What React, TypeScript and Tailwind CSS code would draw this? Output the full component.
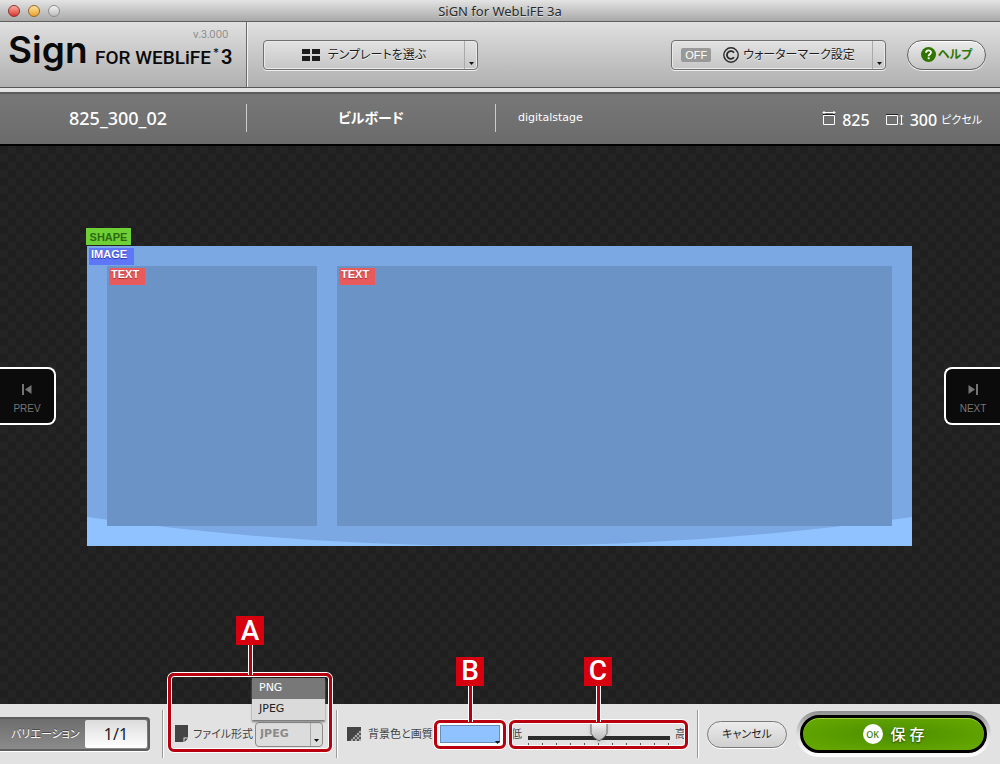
import { useState } from 'react'
import type { ReactNode } from 'react'
import clsx from 'clsx'

const jp = "font-['Noto_Sans','Noto_Sans_CJK_JP',sans-serif] [font-feature-settings:'palt']"
const verdana = "font-['DejaVu_Sans',sans-serif]"
const arial = "font-['Liberation_Sans',sans-serif]"

const formats = ['PNG', 'JPEG']
const ticks = [0, 1, 2, 3, 4, 5, 6, 7, 8, 9, 10]

function Caret({ className }: { className?: string }) {
  return (
    <svg className={clsx('pointer-events-none', className)} width="5" height="3" viewBox="0 0 5 3" aria-hidden="true">
      <path d="M0 0h5L2.5 3z" fill="#111" />
    </svg>
  )
}

function Divider() {
  return <span className="h-12 w-0.5 flex-shrink-0 border-l border-[#999] bg-white" />
}

function Callout({ label, box, badge, stem }: { label: string; box: string; badge: string; stem: string }) {
  return (
    <span className="pointer-events-none absolute inset-0">
      <span
        className={clsx(
          'absolute inset-x-0 rounded-md border-[3px] border-[#b8000f] shadow-[0_0_0_1px_#fff,inset_0_0_0_1px_#fff]',
          box
        )}
      />
      <span className={clsx('absolute w-[5px] border-x border-white bg-[#b8000f]', stem)} />
      <span
        className={clsx(
          "absolute flex h-[29px] w-7 items-center justify-center bg-[#d7000f] font-['Roboto',sans-serif] text-[28px] leading-none font-medium text-white",
          badge
        )}
      >
        {label}
      </span>
    </span>
  )
}

function TitleBar() {
  const lights = ['from-[#f9a9a0] to-[#d8302c] border-[#8a3330]', 'from-[#fde39a] to-[#eaa125] border-[#93682a]', 'from-[#f4f4f4] to-[#bcbcbc] border-[#8c8c8c]']
  return (
    <div className="relative flex h-[22px] items-center border-b border-[#606060] bg-linear-to-b from-[#e4e4e4] to-[#a9a9a9] pl-2">
      <div className="flex gap-2">
        {lights.map((light) => (
          <span key={light} className={clsx('h-3 w-3 rounded-full border bg-linear-to-b', light)} />
        ))}
      </div>
      <h1 className="absolute inset-x-0 text-center font-['Noto_Sans',sans-serif] text-[13px] leading-5 text-[#2b2b2b] [text-shadow:0_1px_0_#ddd]">
        SiGN for WebLiFE 3a
      </h1>
    </div>
  )
}

function Logo() {
  return (
    <div className="relative h-full w-[247px] flex-shrink-0 border-r border-[#6a6a6a] shadow-[1px_0_0_#f2f2f2]">
      <svg width="240" height="64" viewBox="0 0 240 64" role="img" aria-label="Sign for WebLiFE 3">
        <g fontFamily="Inter, sans-serif" fill="#0a0a0a">
          <text x="8" y="41" fontSize="37" fontWeight="600">Sign</text>
          <text x="95" y="42" fontSize="19" fontFamily="Roboto, sans-serif" fontWeight="500">FOR WEBLiFE</text>
          <text x="213" y="35" fontSize="12">*</text>
          <text x="221" y="42" fontSize="20" fontFamily="Roboto, sans-serif" fontWeight="600">3</text>
        </g>
        <text x="193" y="16" fontSize="10" fontFamily="Inter, sans-serif" fill="#8a8a8a">v.3.000</text>
      </svg>
    </div>
  )
}

function ToolButton({ children }: { children: ReactNode }) {
  return (
    <button
      type="button"
      className={clsx(
        'flex h-[30px] w-[215px] rounded-sm border border-[#707070] bg-linear-to-b from-[#e2e2e2] to-[#c6c6c6] text-xs text-[#1c1c1c] shadow-[0_1px_0_#eee,inset_0_0_0_1px_#eaeaea] [text-shadow:0_1px_0_#eee]',
        jp
      )}
    >
      <span className="flex h-full flex-1 items-center justify-center">{children}</span>
      <span className="flex h-full w-[13px] items-end justify-center border-l border-[#aaa] pb-1">
        <Caret />
      </span>
    </button>
  )
}

function Header() {
  return (
    <header className="flex h-[66px] items-center border-b border-[#555] bg-linear-to-b from-[#e0e0e0] to-[#b0b0b0]">
      <Logo />
      <div className="flex flex-1 items-center pr-[14px] pl-4">
        <ToolButton>
          <svg className="mr-2" width="18" height="12" viewBox="0 0 18 12" aria-hidden="true">
            <path d="M0 0h8v5H0zM10 0h8v5h-8zM0 7h8v5H0zM10 7h8v5h-8z" fill="#1c1c1c" />
          </svg>
          テンプレートを選ぶ
        </ToolButton>
        <div className="ml-auto flex items-center gap-[21px]">
          <ToolButton>
            <span className={clsx('mr-3 rounded-xs bg-[#999] px-1 text-[11px] leading-[14px] text-white [text-shadow:none]', arial)}>OFF</span>
            <svg className="mr-1" width="16" height="16" viewBox="0 0 16 16" fill="none" stroke="#2a2a2a" aria-hidden="true">
              <circle cx="8" cy="8" r="7.2" strokeWidth="1.4" />
              <path d="M11 5.700a3.900 3.900 0 1 0 0 4.600" strokeWidth="1.8" />
            </svg>
            <span className="pr-2">ウォーターマーク設定</span>
          </ToolButton>
          <button
            type="button"
            className={clsx(
              'flex h-[30px] w-[79px] items-center justify-center rounded-full border border-[#606060] bg-linear-to-b from-[#ececec] to-[#c4c4c4] text-xs font-bold text-[#2f7500] shadow-[0_1px_0_#f4f4f4,inset_0_1px_0_#fff]',
              jp
            )}
          >
            <svg className="mr-0.5" width="15" height="15" viewBox="0 0 15 15" aria-hidden="true">
              <circle cx="7.5" cy="7.5" r="7.5" fill="#2f7500" />
              <path d="M5 5.800c0-3.200 5-3.200 5-.3 0 1.800-2.400 1.700-2.400 3.700" fill="none" stroke="#fff" strokeWidth="1.8" />
              <path d="M6.700 10.300h1.900v1.900H6.700z" fill="#fff" />
            </svg>
            ヘルプ
          </button>
        </div>
      </div>
    </header>
  )
}

function InfoBar() {
  return (
    <div
      className={clsx(
        'flex h-[58px] items-center border-t-4 border-b-2 border-t-[#e3e3e3] border-b-black bg-linear-to-b from-[#787878] to-[#6b6b6b] text-white shadow-[inset_0_3px_1px_-1px_#5a5a5a]',
        jp
      )}
    >
      <p className="w-[246px] pr-2.5 text-center text-lg font-medium">825_300_02</p>
      <span className="h-7 w-px bg-[#ccc]" />
      <p className="w-[248px] text-center text-sm font-bold">ビルボード</p>
      <span className="h-7 w-px bg-[#ccc]" />
      <p className={clsx('pl-[22px] text-[11px]', verdana)}>digitalstage</p>
      <div className="ml-auto flex items-center pt-1 pr-[18px] text-base font-medium">
        <svg className="mr-1.5 mb-1" width="14" height="16" viewBox="0 0 14 16" fill="none" stroke="#fff" aria-hidden="true">
          <path d="M1 2.500h12M2.500 1L1 2.500 2.500 4M11.500 1L13 2.500 11.500 4M1.500 5.500h11v9h-11z" />
          <path d="M1 4.500h12" stroke="#222" />
        </svg>
        825
        <svg className="mr-1.5 ml-4" width="18" height="12" viewBox="0 0 18 12" fill="none" stroke="#fff" aria-hidden="true">
          <path d="M.5 1.500h11v9H.5zM15.500 1v10M14 2.500L15.500 1 17 2.500M14 9.500L15.500 11 17 9.500" />
          <path d="M0 .5h12" stroke="#222" />
        </svg>
        300
        <span className="ml-1 text-[11px] font-normal">ピクセル</span>
      </div>
    </div>
  )
}

function TextCell({ className }: { className: string }) {
  return (
    <div className={clsx('relative h-[260px] bg-[#6b93c5] pt-0.5 pl-0.5', className)}>
      <span className={clsx('block h-[17px] w-9 bg-[#e95a5d] pl-0.5 text-[11px] leading-[13px] font-bold text-white [text-shadow:0_1px_1px_#933]', arial)}>
        TEXT
      </span>
    </div>
  )
}

function NavButton({ label, className, children }: { label: string; className: string; children: ReactNode }) {
  return (
    <button
      type="button"
      className={clsx(
        'flex h-[58px] w-14 flex-shrink-0 flex-col items-center justify-center gap-2 border-y-2 border-white bg-[#0b0b0b] pt-1.5 text-[10px] leading-3 text-[#757575]',
        arial,
        className
      )}
    >
      <svg width="10" height="11" viewBox="0 0 10 11" fill="#757575" aria-hidden="true">
        {children}
      </svg>
      {label}
    </button>
  )
}

function Stage() {
  return (
    <main className="flex flex-1 items-center bg-[#1f1f1f] bg-[conic-gradient(#242424_25%,#1f1f1f_0_50%,#242424_0_75%,#1f1f1f_0)] bg-size-[16px_16px] pb-[58px]">
      <NavButton label="PREV" className="rounded-r-lg border-r-2">
        <path d="M0 0h2v11H0zM9.500 1v9L3 5.500z" />
      </NavButton>
      <div className="relative mr-8 ml-[31px] flex h-[300px] flex-1 gap-5 bg-[#7ba7e2] p-5">
        <svg className="absolute inset-0 h-full w-full" viewBox="0 0 825 300" preserveAspectRatio="none" aria-hidden="true">
          <path d="M0 271Q412.500 329 825 271V300H0z" fill="#8fc2ff" />
        </svg>
        <span className={clsx('absolute -top-[18px] -left-px h-[17px] w-[45px] bg-[#6fd035] text-center text-[11px] leading-[19px] font-bold text-[#2c6a12]', arial)}>
          SHAPE
        </span>
        <span className={clsx('absolute top-0.5 left-0.5 h-[17px] w-[45px] bg-[#5e77f8] pl-0.5 text-[11px] leading-[13px] font-bold text-white [text-shadow:0_1px_1px_#339]', arial)}>
          IMAGE
        </span>
        <TextCell className="w-[210px]" />
        <TextCell className="flex-1" />
      </div>
      <NavButton label="NEXT" className="rounded-l-lg border-l-2">
        <path d="M.5 1v9L7 5.500zM8 0h2v11H8z" />
      </NavButton>
    </main>
  )
}

function FormatField() {
  const [format, setFormat] = useState('JPEG')
  return (
    <div className="relative ml-1 flex h-9 w-[164px] items-center pl-[7px]">
      <svg className="mr-1" width="14" height="18" viewBox="0 0 14 18" aria-hidden="true">
        <path d="M0 0h13v12.500H8.500V17H0z" fill="#444" />
        <path d="M9.500 13.500H13L9.500 17z" fill="#444" />
      </svg>
      <label htmlFor="format" className="w-[62px] text-[11px] whitespace-nowrap text-[#444]">
        ファイル形式
      </label>
      <span className="relative">
        <select
          id="format"
          value={format}
          onChange={(e) => setFormat(e.target.value)}
          className={clsx('block h-[25px] w-[68px] appearance-none rounded-sm border border-[#8a8a8a] bg-[#dcdcdc] pl-1 text-[11px] font-bold text-[#8a8a8a]', verdana)}
        >
          {formats.map((f) => (
            <option key={f}>{f}</option>
          ))}
        </select>
        <span className="pointer-events-none absolute inset-y-px right-px flex w-3 items-end justify-center border-l border-[#aaa] pb-1">
          <Caret />
        </span>
      </span>
      <div className={clsx('absolute right-[7px] bottom-8 w-[73px] text-[11px] shadow-[0_2px_2px_#777]', verdana)}>
        {formats.map((f) => (
          <button
            key={f}
            type="button"
            onClick={() => setFormat(f)}
            className={clsx('block h-[21px] w-full pl-[7px] text-left', f === 'PNG' ? 'bg-[#787878] text-white' : 'bg-[#dadada] text-[#222]')}
          >
            {f}
          </button>
        ))}
      </div>
      <Callout label="A" box="bottom-0 h-[79px]" stem="bottom-[77px] left-[80px] h-[30px]" badge="bottom-[107px] left-[68px]" />
    </div>
  )
}

function ColorField() {
  const [color, setColor] = useState('#8fc2ff')
  return (
    <>
      <svg className="mr-[7px] ml-[9px]" width="14" height="14" viewBox="0 0 14 14" aria-hidden="true">
        <path d="M0 0h14v14H0z" fill="#a8a8a8" />
        <path d="M12 2h2v2h-2zM10 4h2v2h-2zM8 6h2v2H8zM12 6h2v2h-2zM6 8h2v2H6zM10 8h2v2h-2zM4 10h2v2H4zM8 10h2v2H8zM12 10h2v2h-2zM2 12h2v2H2zM6 12h2v2H6zM10 12h2v2h-2z" fill="#555" />
        <path d="M0 0h14v2L2 14H0z" fill="#444" />
      </svg>
      <label htmlFor="bgcolor" className="w-[66px] text-[11px] whitespace-nowrap text-[#444]">
        背景色と画質
      </label>
      <div className="relative flex h-[29px] w-[72px] items-center justify-center">
        <input
          id="bgcolor"
          type="color"
          value={color}
          onChange={(e) => setColor(e.target.value)}
          className="block h-[22px] w-16 appearance-none border border-white bg-white p-px [&::-webkit-color-swatch]:rounded-none [&::-webkit-color-swatch]:border [&::-webkit-color-swatch]:border-[#6a8db8] [&::-webkit-color-swatch-wrapper]:p-0"
        />
        <Caret className="absolute right-1.5 bottom-[5px]" />
        <Callout label="B" box="inset-y-0" stem="bottom-[27px] left-[34px] h-9" badge="bottom-[63px] left-[22px]" />
      </div>
    </>
  )
}

function QualityField() {
  const [quality, setQuality] = useState(5)
  return (
    <div className="relative ml-[3px] flex h-[29px] w-[179px] items-center justify-between px-0.5 text-[11px] text-[#444]">
      <span>低</span>
      <div className="relative h-6 w-[142px]">
        <div className="mt-[14px] h-1 bg-[#2c2c2c]" />
        <div className="mt-[3px] flex justify-between">
          {ticks.map((t) => (
            <span key={t} className="h-0.5 w-px bg-[#555]" />
          ))}
        </div>
        <svg className="absolute top-0 -ml-[9px] drop-shadow-sm" style={{ left: `${quality * 10}%` }} width="18" height="20" viewBox="0 0 18 20" aria-hidden="true">
          <defs>
            <linearGradient id="knob" x2="0" y2="1">
              <stop stopColor="#f4f4f4" />
              <stop offset="1" stopColor="#b4b4b4" />
            </linearGradient>
          </defs>
          <path d="M2.500.5h13q1.500 0 1.500 1.500v9.500Q14.500 16 9 19 3.500 16 1 11.500V2Q1 .5 2.500.5z" fill="url(#knob)" stroke="#666" />
        </svg>
        <input
          type="range"
          aria-label="画質"
          min="0"
          max="10"
          value={quality}
          onChange={(e) => setQuality(Number(e.target.value))}
          className="absolute inset-0 w-full cursor-pointer opacity-0"
        />
      </div>
      <span>高</span>
      <Callout label="C" box="inset-y-0" stem="bottom-[27px] left-[87px] h-9" badge="bottom-[63px] left-[75px]" />
    </div>
  )
}

function Footer() {
  return (
    <footer className={clsx('relative flex h-[60px] items-center bg-[#e2e2e2]', jp)}>
      <div className="mr-3 flex h-[34px] w-[150px] items-center justify-between rounded-r-sm border-2 border-l-0 border-[#5e5e5e] bg-linear-to-b from-[#6e6e6e] to-[#8b8b8b] pr-px pl-[11px] shadow-[0_1px_0_#fff]">
        <label htmlFor="variation" className="text-[11px] whitespace-nowrap text-white [text-shadow:0_-1px_0_#444]">
          バリエーション
        </label>
        <input
          id="variation"
          defaultValue="1/1"
          className="h-7 w-[62px] rounded-xs bg-linear-to-b from-[#dcdcdc] to-white text-center text-base text-[#222]"
        />
      </div>
      <Divider />
      <FormatField />
      <span className="w-1" />
      <Divider />
      <ColorField />
      <QualityField />
      <span className="w-[9px]" />
      <Divider />
      <div className="ml-auto flex items-center gap-[9px] pr-[9px]">
        <button
          type="button"
          className="h-[27px] w-20 rounded-full border border-[#7a7a7a] bg-linear-to-b from-[#ececec] to-[#cfcfcf] text-[11px] text-[#222] shadow-[0_1px_0_#fff]"
        >
          キャンセル
        </button>
        <div className="rounded-full bg-linear-to-b from-[#8f8f8f] via-[#dcdcdc] to-white p-1">
          <button
            type="button"
            className="flex h-[38px] w-[187px] items-center justify-center gap-2 rounded-full border-3 border-black bg-radial from-[#4b8f00] to-[#69ab00] text-[15px] font-medium text-white shadow-[inset_0_1px_0_#9bd13c] [text-shadow:0_1px_2px_#1d3d00]"
          >
            <span className="flex h-5 w-5 items-center justify-center rounded-full bg-white text-[9px] leading-none text-[#3c7a00] [text-shadow:none]">
              OK
            </span>
            保 存
          </button>
        </div>
      </div>
    </footer>
  )
}

export default function App() {
  return (
    <div className="flex min-h-screen flex-col overflow-hidden">
      <TitleBar />
      <Header />
      <InfoBar />
      <Stage />
      <Footer />
    </div>
  )
}
